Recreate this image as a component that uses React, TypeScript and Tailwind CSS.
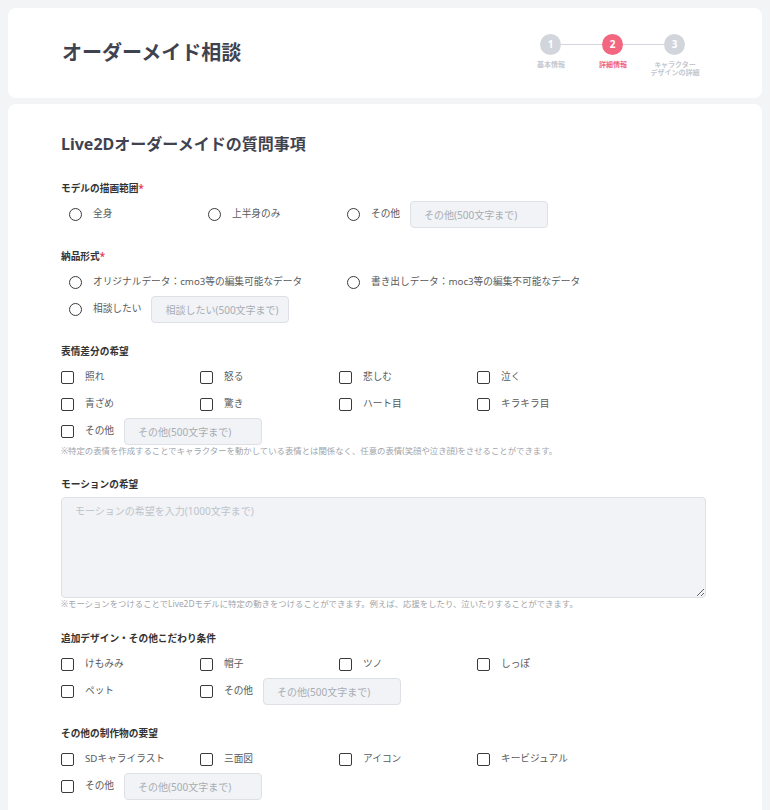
const font = { fontFamily: '"Noto Sans", "Noto Sans CJK JP", sans-serif' }

function Radio({ label }: { label: string }) {
  return (
    <label className="flex items-center h-[27px] pl-2">
      <span className="w-[13px] h-[13px] rounded-full border-[1.5px] border-[#3a3a3a] shrink-0" />
      <span className="ml-[11px] text-[9.7px] text-[#5a5a5a] whitespace-nowrap">{label}</span>
    </label>
  )
}

function Check({ label }: { label: string }) {
  return (
    <label className="flex items-center h-[27px]">
      <span className="w-[13px] h-[13px] rounded-[2px] border-[1.5px] border-[#3a3a3a] shrink-0" />
      <span className="ml-[11px] text-[9.7px] text-[#5a5a5a] whitespace-nowrap">{label}</span>
    </label>
  )
}

function TextBox({ placeholder }: { placeholder: string }) {
  return (
    <input
      placeholder={placeholder}
      className="w-[138px] h-[27px] rounded-[4px] bg-[#f1f3f6] border border-[#dde1e6] pl-[13px] text-[10px] placeholder:text-[#a8adb4] outline-none"
      style={font}
    />
  )
}

function Label({ text, required }: { text: string; required?: boolean }) {
  return (
    <div className="text-[9.7px] font-bold leading-[14px] text-[#333]">
      {text}
      {required && <span className="text-[#e5485f]">*</span>}
    </div>
  )
}

function Note({ text }: { text: string }) {
  return <p className="text-[8.4px] leading-[12px] text-[#a0a4aa] whitespace-nowrap">{text}</p>
}

const steps = [
  { n: '1', label: ['基本情報'], active: false },
  { n: '2', label: ['詳細情報'], active: true },
  { n: '3', label: ['キャラクター', 'デザインの詳細'], active: false },
]

function Stepper() {
  return (
    <div className="flex flex-col">
      <div className="flex items-center pl-[20px]">
        {steps.map((s, i) => (
          <div key={s.n} className="flex items-center">
            {i > 0 && <div className="w-[41px] h-[1px] bg-[#d3d6dc]" />}
            <div
              className={`w-[21px] h-[21px] rounded-full flex items-center justify-center text-white text-[10px] font-bold ${
                s.active ? 'bg-[#f2667f]' : 'bg-[#d2d5dc]'
              }`}
            >
              {s.n}
            </div>
          </div>
        ))}
      </div>
      <div className="flex mt-[6px]">
        {steps.map(s => (
          <div
            key={s.n}
            className={`w-[62px] text-center text-[7px] leading-[8px] font-bold ${
              s.active ? 'text-[#f2667f]' : 'text-[#c5c8ce]'
            }`}
          >
            {s.label.map(l => (
              <div key={l}>{l}</div>
            ))}
          </div>
        ))}
      </div>
    </div>
  )
}

export default function App() {
  return (
    <div className="min-h-screen bg-[#f2f4f6] pt-2 px-2" style={font}>
      {/* Header */}
      <div className="bg-white rounded-lg h-[90px] flex items-center justify-between pl-[54px] pr-[56px]">
        <h1 className="text-[20px] font-bold text-[#3f4350]">オーダーメイド相談</h1>
        <div className="pt-[4px]">
          <Stepper />
        </div>
      </div>

      {/* Form */}
      <div className="bg-white rounded-t-lg mt-[6px] pl-[53px] pr-[56px] pt-[30px] pb-10">
        <h2 className="text-[16px] font-bold leading-[20px] text-[#3f4350]">
          Live2Dオーダーメイドの質問事項
        </h2>

        <div className="mt-[28px]">
          <Label text="モデルの描画範囲" required />
          <div className="mt-[5px] grid grid-cols-[139px_139px_auto]">
            <Radio label="全身" />
            <Radio label="上半身のみ" />
            <div className="flex items-center gap-[10px]">
              <Radio label="その他" />
              <TextBox placeholder="その他(500文字まで)" />
            </div>
          </div>
        </div>

        <div className="mt-[22px]">
          <Label text="納品形式" required />
          <div className="mt-[5px] grid grid-cols-[139px_139px_auto]">
            <div className="col-span-2">
              <Radio label="オリジナルデータ：cmo3等の編集可能なデータ" />
            </div>
            <Radio label="書き出しデータ：moc3等の編集不可能なデータ" />
            <div className="col-span-3 flex items-center gap-[10px]">
              <Radio label="相談したい" />
              <TextBox placeholder="相談したい(500文字まで)" />
            </div>
          </div>
        </div>

        <div className="mt-[22px]">
          <Label text="表情差分の希望" />
          <div className="mt-[5px] grid grid-cols-[139px_139px_138px_auto]">
            {['照れ', '怒る', '悲しむ', '泣く', '青ざめ', '驚き', 'ハート目', 'キラキラ目'].map(t => (
              <Check key={t} label={t} />
            ))}
            <div className="col-span-4 flex items-center gap-[10px]">
              <Check label="その他" />
              <TextBox placeholder="その他(500文字まで)" />
            </div>
          </div>
          <Note text="※特定の表情を作成することでキャラクターを動かしている表情とは関係なく、任意の表情(笑顔や泣き顔)をさせることができます。" />
        </div>

        <div className="mt-[21px]">
          <Label text="モーションの希望" />
          <textarea
            placeholder="モーションの希望を入力(1000文字まで)"
            className="mt-[5px] block w-full h-[101px] rounded-[4px] bg-[#f1f3f6] border border-[#dde1e6] px-[13px] py-[6px] text-[10px] placeholder:text-[#bfc3c9] outline-none"
            style={font}
          />
          <Note text="※モーションをつけることでLive2Dモデルに特定の動きをつけることができます。例えば、応援をしたり、泣いたりすることができます。" />
        </div>

        <div className="mt-[22px]">
          <Label text="追加デザイン・その他こだわり条件" />
          <div className="mt-[5px] grid grid-cols-[139px_139px_138px_auto]">
            {['けもみみ', '帽子', 'ツノ', 'しっぽ', 'ペット'].map(t => (
              <Check key={t} label={t} />
            ))}
            <div className="col-span-3 flex items-center gap-[10px]">
              <Check label="その他" />
              <TextBox placeholder="その他(500文字まで)" />
            </div>
          </div>
        </div>

        <div className="mt-[22px]">
          <Label text="その他の制作物の要望" />
          <div className="mt-[5px] grid grid-cols-[139px_139px_138px_auto]">
            {['SDキャライラスト', '三面図', 'アイコン', 'キービジュアル'].map(t => (
              <Check key={t} label={t} />
            ))}
            <div className="col-span-4 flex items-center gap-[10px]">
              <Check label="その他" />
              <TextBox placeholder="その他(500文字まで)" />
            </div>
          </div>
        </div>
      </div>
    </div>
  )
}
